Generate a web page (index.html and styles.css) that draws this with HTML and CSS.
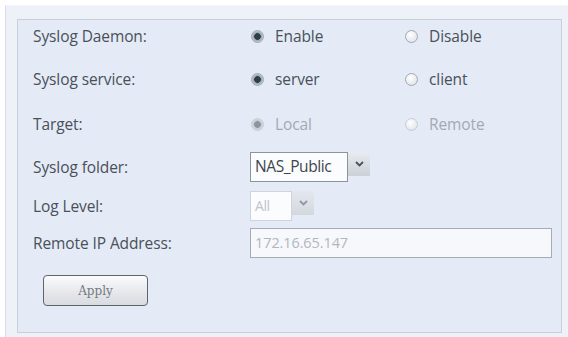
FILE: index.html
```html
<!DOCTYPE html>
<html lang="en">
<head>
  <meta charset="UTF-8" />
  <title>Syslog</title>
  <link rel="stylesheet" href="styles.css">
</head>
<body>

<div class="frame">
  <form class="panel">

    <div class="row r1">
      <span class="label">Syslog Daemon:</span>
      <span class="opt"><i class="radio on"></i>Enable</span>
      <span class="opt"><i class="radio"></i>Disable</span>
    </div>

    <div class="row r2">
      <span class="label">Syslog service:</span>
      <span class="opt"><i class="radio on"></i>server</span>
      <span class="opt"><i class="radio"></i>client</span>
    </div>

    <div class="row r3">
      <span class="label">Target:</span>
      <span class="opt off"><i class="radio on"></i>Local</span>
      <span class="opt off"><i class="radio"></i>Remote</span>
    </div>

    <div class="row r4">
      <span class="label">Syslog folder:</span>
      <span class="select">
        <span class="value">NAS_Public</span>
        <span class="arrow"><svg width="9" height="6" viewBox="0 0 9 6"><path d="M1 1l3.5 3.5L8 1" fill="none" stroke="#4a525c" stroke-width="1.8"/></svg></span>
      </span>
    </div>

    <div class="row r5">
      <span class="label">Log Level:</span>
      <span class="select off">
        <span class="value small">All</span>
        <span class="arrow"><svg width="9" height="6" viewBox="0 0 9 6"><path d="M1 1l3.5 3.5L8 1" fill="none" stroke="#8f97a2" stroke-width="1.8"/></svg></span>
      </span>
    </div>

    <div class="row r6">
      <span class="label">Remote IP Address:</span>
      <span class="ip">172.16.65.147</span>
    </div>

    <button type="button" class="apply">Apply</button>
  </form>
</div>

</body>
</html>
```

FILE: styles.css
```css
body { margin: 0; background: #fff; font-family: "Open Sans", "DejaVu Sans", sans-serif; color: #4a5058; }

.frame {
  margin: 5px 0 0 5px;
  height: 332px;
  background: #eef1f8;
  border-left: 1px solid #ddd9ee;
  border-top: 1px solid #f4f5fa;
  padding: 13px 6px 0 11px;
  box-sizing: border-box;
}
.panel {
  box-sizing: border-box;
  width: 545px;
  height: 314px;
  background: #e4ebf7;
  border: 1px solid #c9cfdb;
  padding: 0 0 0 15px;
  font-size: 15.5px;
  letter-spacing: -0.1px;
}

.row { display: flex; align-items: center; height: 30px; }
.r1 { margin-top: 1px; }
.r2 { margin-top: 13px; }
.r3 { margin-top: 15px; }
.r4 { margin-top: 13px; }
.r5 { margin-top: 9px; }
.r6 { margin-top: 7px; }

.label { width: 217px; flex: none; }

.opt { display: flex; align-items: center; width: 154px; }
.opt.off { color: #a4a9b1; }

.radio {
  box-sizing: border-box;
  width: 13px;
  height: 13px;
  margin: 0 11px 0 1px;
  border-radius: 50%;
  border: 1px solid #a3a9b1;
  background: radial-gradient(circle at 40% 35%, #ffffff, #d8dde4);
}
.radio.on { background: radial-gradient(circle, #2c3f4c 0 3px, #96a0a9 3.6px, #cdd3da 6px); }
.off .radio { border-color: #c8ccd3; }
.off .radio.on { background: radial-gradient(circle, #8c959d 0 3px, #c0c6cc 3.6px, #dde1e6 6px); }

.select { display: flex; align-items: flex-start; height: 30px; }
.select .value {
  box-sizing: border-box;
  height: 30px;
  width: 98px;
  padding: 0 0 0 4px;
  line-height: 27px;
  border: 1px solid #8d939c;
  background: #fbfcfe;
  color: #3f454d;
  letter-spacing: -0.4px;
}
.select .value.small { width: 42px; color: #c0c4ca; border-color: #cfd4dc; font-size: 14px; }
.arrow {
  display: flex;
  align-items: center;
  justify-content: center;
  width: 22px;
  height: 24px;
  background: linear-gradient(#e9ecf0, #cbd0d7);
}
.select.off .arrow { background: linear-gradient(#e4e8ee, #d3d8df); }

.ip {
  box-sizing: border-box;
  width: 302px;
  height: 30px;
  padding-left: 4px;
  line-height: 27px;
  border: 1px solid #a7acb4;
  background: #f6f8fc;
  color: #b2b6bd;
  font-size: 14.5px;
}

.apply {
  display: block;
  margin: 17px 0 0 10px;
  width: 105px;
  height: 31px;
  border: 1px solid #5f646b;
  border-radius: 4px;
  background: linear-gradient(#fbfbfc, #e4e6ea 60%, #d8dbe0);
  font-family: "DejaVu Serif", serif;
  font-size: 12px;
  color: #757a82;
}
```
